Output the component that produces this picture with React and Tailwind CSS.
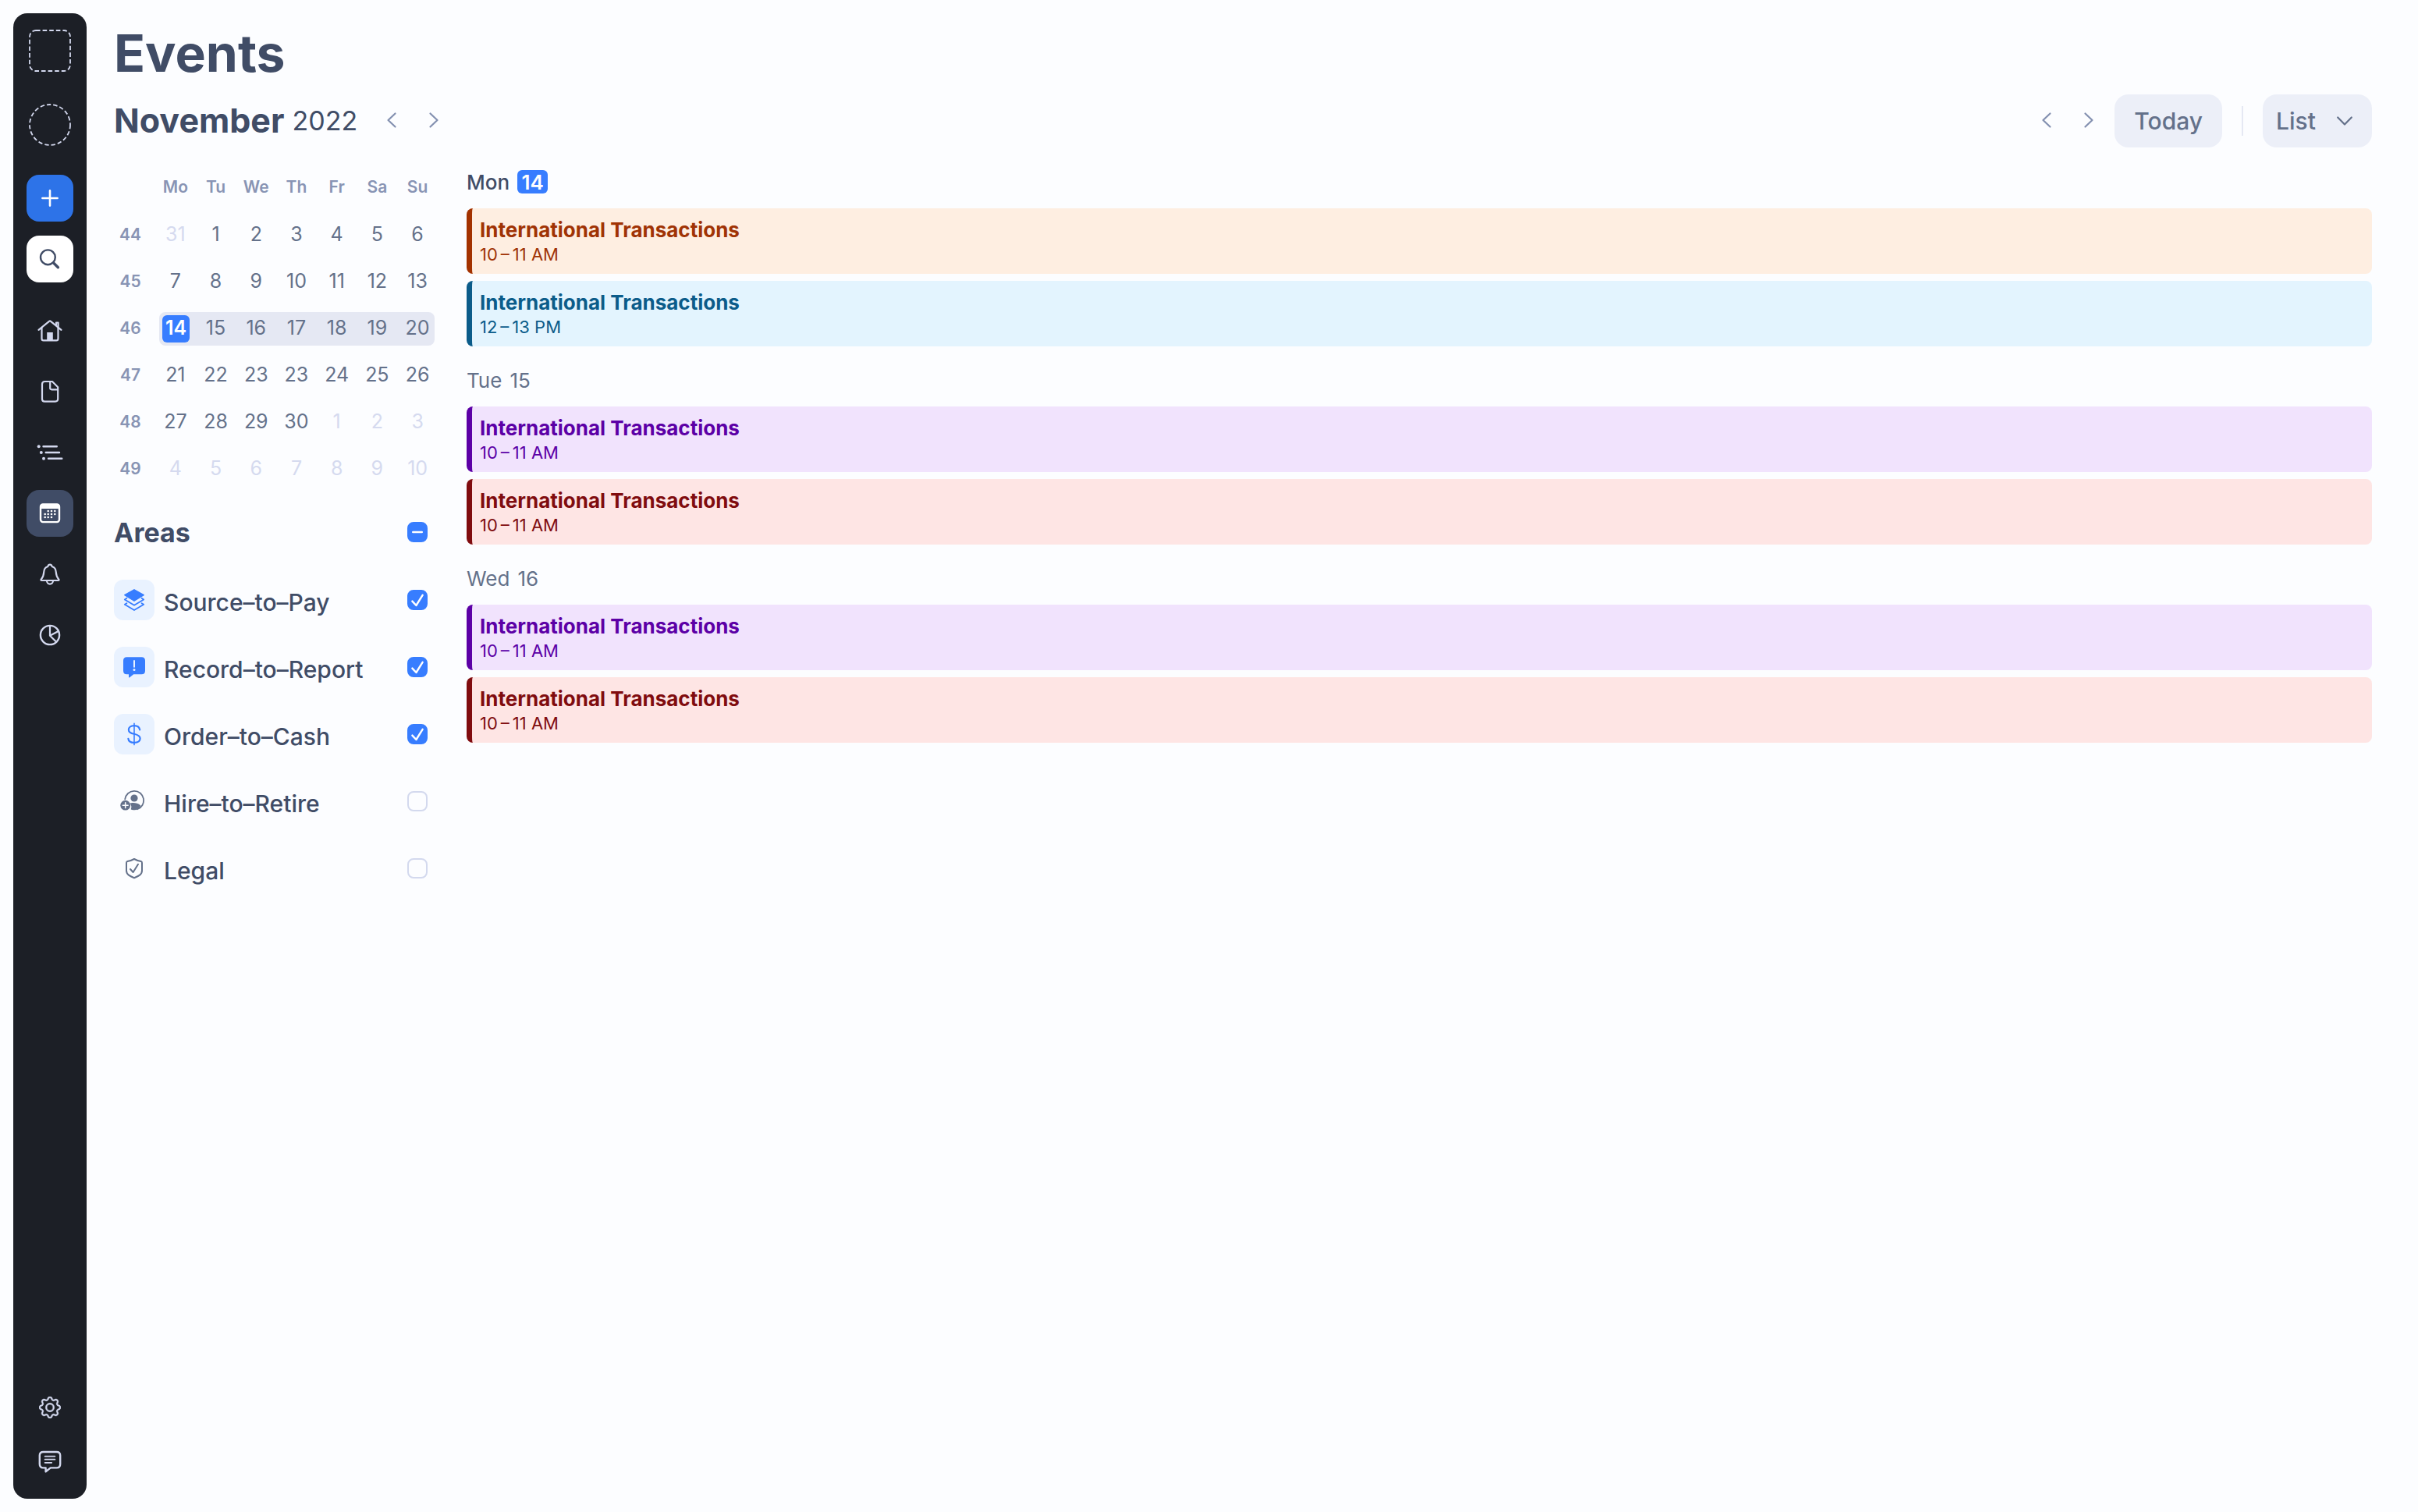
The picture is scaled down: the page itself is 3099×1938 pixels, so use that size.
import { useState } from 'react'
import { BsGear } from 'react-icons/bs'

function NavIcon({ children }) {
  return (
    <svg width="36" height="36" viewBox="-18 -18 36 36" fill="none" stroke="currentColor" strokeWidth="2.2" strokeLinecap="round" strokeLinejoin="round">
      {children}
    </svg>
  )
}

function HomeIcon() {
  return (
    <NavIcon>
      <path d="M-14.5 -1.2 L-1 -12.2 Q0 -13 1 -12.2 L14.5 -1.2" />
      <path d="M-10.5 -4 V10 Q-10.5 12.4 -8.2 12.4 H8.2 Q10.5 12.4 10.5 10 V-4" />
      <path d="M8 -7 V-10.5 H10.6 V-4.5" />
      <rect x="-3.8" y="2" width="7.6" height="10.4" fill="currentColor" stroke="none" />
    </NavIcon>
  )
}

function DocIcon() {
  return (
    <NavIcon>
      <path d="M3 -13 H-6.5 Q-10 -13 -10 -9.5 V9.5 Q-10 12.6 -6.8 12.6 H7 Q10.2 12.6 10.2 9.5 V-5.8 Z" />
      <path d="M0.2 -12.8 V-4.6 Q0.2 -2.7 2.2 -2.7 H10" />
    </NavIcon>
  )
}

function ListIcon() {
  return (
    <NavIcon>
      <path d="M-8.5 -7.7 H8.8 M-5.3 0 H12 M-2 7.7 H15.3" strokeWidth="2.4" />
      <g fill="currentColor" stroke="none">
        <circle cx="-14.3" cy="-7.7" r="2" />
        <circle cx="-11.2" cy="0" r="2" />
        <circle cx="-8" cy="7.7" r="2" />
      </g>
    </NavIcon>
  )
}

const calendarDots = [
  [-2.3, -3], [2, -3], [6.3, -3],
  [-6.3, 1], [-2.3, 1], [2, 1], [6.3, 1],
  [-6.3, 5], [-2.3, 5], [2, 5],
]

function CalendarIcon() {
  return (
    <NavIcon>
      <rect x="-12" y="-11.5" width="24" height="22.6" rx="3" strokeWidth="2.4" />
      <path d="M-12 -6.8 V-8.5 Q-12 -11.5 -9 -11.5 H9 Q12 -11.5 12 -8.5 V-6.8 Z" fill="currentColor" strokeWidth="1.4" />
      {calendarDots.map(([x, y]) => (
        <circle key={`${x},${y}`} cx={x} cy={y} r="1.3" fill="currentColor" stroke="none" />
      ))}
    </NavIcon>
  )
}

function BellIcon() {
  return (
    <NavIcon>
      <path d="M-10.5 8 H10.5 Q12.3 8 11.2 6.4 C8.5 3.5 8 1.5 7.8 -2.5 C7.6 -6.8 5.8 -9 2.8 -9.8 C2.3 -11.5 1.3 -12.4 0 -12.4 C-1.3 -12.4 -2.3 -11.5 -2.8 -9.8 C-5.8 -9 -7.6 -6.8 -7.8 -2.5 C-8 1.5 -8.5 3.5 -11.2 6.4 Q-12.3 8 -10.5 8 Z" />
      <path d="M-4 8.3 C-4 14 4 14 4 8.3" />
    </NavIcon>
  )
}

function PieIcon() {
  return (
    <NavIcon>
      <circle cx="0" cy="0" r="12.1" strokeWidth="2.4" />
      <path d="M0 -12 V0.8 L10.8 -5 M0 0.8 L8.2 8.8" />
    </NavIcon>
  )
}

function ChatIcon() {
  return (
    <NavIcon>
      <path d="M-8.5 -12 H8.5 Q13.2 -12 13.2 -7.4 V3.6 Q13.2 8.4 8.5 8.4 H0.8 L-5.4 13.2 V8.4 H-8.5 Q-13.2 8.4 -13.2 3.6 V-7.4 Q-13.2 -12 -8.5 -12 Z" strokeWidth="2.4" />
      <path d="M-6.4 -6.4 H6.4 M-6.4 -2.3 H6.4 M-6.4 1.8 H2.2" strokeWidth="1.8" />
    </NavIcon>
  )
}

function LayersIcon() {
  return (
    <NavIcon>
      <path d="M0 -13.2 L12.2 -6.3 L0 1.2 L-12.2 -6.3 Z" fill="currentColor" strokeWidth="1.4" />
      <path d="M-9.6 -2.2 L-12.2 -0.5 L0 6.8 L12.2 -0.5 L9.6 -2.2" strokeWidth="1.8" />
      <path d="M-9.6 4.2 L-12.2 5.8 L0 13 L12.2 5.8 L9.6 4.2" strokeWidth="1.8" />
    </NavIcon>
  )
}

function ReportIcon() {
  return (
    <NavIcon>
      <path d="M-9.5 -12.8 H9.5 Q14 -12.8 14 -8.3 V4.7 Q14 9.2 9.5 9.2 H-0.8 L-5.8 13.2 Q-7 14 -7 12.6 V9.2 H-9.5 Q-14 9.2 -14 4.7 V-8.3 Q-14 -12.8 -9.5 -12.8 Z" fill="currentColor" stroke="none" />
      <path d="M0 -8 V-0.3" stroke="#e9f2ff" strokeWidth="2" />
      <circle cx="0" cy="3.6" r="1.5" fill="#e9f2ff" stroke="none" />
    </NavIcon>
  )
}

function DollarIcon() {
  return (
    <NavIcon>
      <path d="M7.2 -5.6 C6.6 -9 4 -10.8 0 -10.8 C-4.4 -10.8 -7.1 -8.7 -7.1 -5.6 C-7.1 -2.4 -4.6 -1.2 0 -0.2 C5 0.9 7.6 2.4 7.6 5.6 C7.6 9 4.6 10.9 0 10.9 C-4.4 10.9 -7.2 9.2 -7.6 5.8" />
      <path d="M0 -13.6 V13.6" strokeWidth="1.6" />
    </NavIcon>
  )
}

function HireIcon() {
  return (
    <NavIcon>
      <path d="M-11.8 -2.6 A12 12 0 1 1 4 10.2" strokeWidth="1.8" />
      <circle cx="0" cy="-4" r="4.6" fill="currentColor" stroke="none" />
      <path d="M-5.6 2.8 C-3 1.6 4.5 1.6 8.2 5.4 C6.5 10 2.5 11.3 0 11.3 C-2 11.3 -3.4 11 -4.4 10.2 C-3 8 -3.4 5 -5.6 2.8 Z" fill="currentColor" stroke="none" />
      <circle cx="-11.3" cy="5.2" r="6.4" fill="currentColor" stroke="none" />
      <path d="M-11.3 1.8 V8.6 M-14.7 5.2 H-7.9" stroke="#fcfdff" strokeWidth="1.6" />
    </NavIcon>
  )
}

function ShieldIcon() {
  return (
    <NavIcon>
      <path d="M0 -12 C3 -10.4 6 -9.3 8.6 -8.9 Q10 -8.6 10 -7 V3 C10 8 5.5 10 0 12.2 C-5.5 10 -10 8 -10 3 V-7 Q-10 -8.6 -8.6 -8.9 C-6 -9.3 -3 -10.4 0 -12 Z" strokeWidth="2" />
      <path d="M-5 1 L-1.4 5 L5 -5.2" strokeWidth="2" />
    </NavIcon>
  )
}

function Chevron({ d }) {
  return (
    <svg width="24" height="24" viewBox="-12 -12 24 24" fill="none" stroke="currentColor" strokeWidth="2.2" strokeLinecap="round" strokeLinejoin="round">
      <path d={d} />
    </svg>
  )
}

function ArrowButtons({ unit }) {
  return (
    <div className="flex pb-0.5 text-[#8390b0]">
      <button aria-label={`Previous ${unit}`} className="w-[54px] h-[54px] flex items-center justify-center cursor-pointer">
        <Chevron d="M4.5 -8.5 L-4.5 0 L4.5 8.5" />
      </button>
      <button aria-label={`Next ${unit}`} className="w-[54px] h-[54px] flex items-center justify-center cursor-pointer">
        <Chevron d="M-4.5 -8.5 L4.5 0 L-4.5 8.5" />
      </button>
    </div>
  )
}

const navItems = [
  { label: 'Home', icon: HomeIcon },
  { label: 'Documents', icon: DocIcon },
  { label: 'Tasks', icon: ListIcon },
  { label: 'Events', icon: CalendarIcon, active: true },
  { label: 'Notifications', icon: BellIcon },
  { label: 'Reports', icon: PieIcon },
]

function Sidebar() {
  return (
    <aside className="w-[94px] shrink-0 rounded-[18px] bg-[#1c1f26] text-[#d3d8ee] flex flex-col items-center pt-[21px] pb-[18px]">
      <svg width="54" height="54" viewBox="0 0 54 54" fill="none" stroke="currentColor" strokeWidth="1.8" strokeDasharray="5.6 3">
        <rect x="1" y="1" width="52" height="52" rx="8" />
      </svg>
      <svg className="mt-[41px]" width="54" height="54" viewBox="0 0 54 54" fill="none" stroke="currentColor" strokeWidth="1.8" strokeDasharray="5.4 3">
        <circle cx="27" cy="27" r="26" />
      </svg>
      <div className="mt-[37px] flex flex-col gap-[18px]">
        <button aria-label="Create" className="w-[60px] h-[60px] rounded-2xl bg-[#2d73e8] text-white flex items-center justify-center cursor-pointer">
          <NavIcon><path d="M0 -9.6 V9.6 M-9.6 0 H9.6" strokeWidth="2.6" /></NavIcon>
        </button>
        <button aria-label="Search" className="w-[60px] h-[60px] rounded-2xl bg-white text-[#404c66] flex items-center justify-center cursor-pointer">
          <NavIcon>
            <circle cx="-2.6" cy="-2.2" r="9.4" strokeWidth="2.4" />
            <path d="M4.6 5 L10.4 10.8" strokeWidth="3.4" />
          </NavIcon>
        </button>
      </div>
      <nav className="mt-8 flex flex-col gap-[18px]">
        {navItems.map(({ label, icon: Icon, active }) => (
          <a
            key={label}
            href="#"
            aria-label={label}
            className={`w-[60px] h-[60px] rounded-2xl flex items-center justify-center ${active ? 'bg-[#404c66] text-white' : ''}`}
          >
            <Icon />
          </a>
        ))}
      </nav>
      <div className="mt-auto flex flex-col gap-[9px]">
        <a href="#" aria-label="Settings" className="w-[60px] h-[60px] flex items-center justify-center">
          <BsGear size={28} strokeWidth="0.3" />
        </a>
        <a href="#" aria-label="Feedback" className="w-[60px] h-[60px] flex items-center justify-center">
          <ChatIcon />
        </a>
      </div>
    </aside>
  )
}

const weekdays = ['Mo', 'Tu', 'We', 'Th', 'Fr', 'Sa', 'Su']

// muted: [from, to) columns that belong to a neighbouring month
const weeks = [
  { number: 44, days: [31, 1, 2, 3, 4, 5, 6], muted: [0, 1] },
  { number: 45, days: [7, 8, 9, 10, 11, 12, 13] },
  { number: 46, days: [14, 15, 16, 17, 18, 19, 20], current: true },
  { number: 47, days: [21, 22, 23, 23, 24, 25, 26] },
  { number: 48, days: [27, 28, 29, 30, 1, 2, 3], muted: [4, 7] },
  { number: 49, days: [4, 5, 6, 7, 8, 9, 10], muted: [0, 7] },
]

function DayCell({ day, col, current, muted }) {
  const today = current && col === 0
  let band = 'justify-center'
  if (current) {
    band = 'justify-center bg-[#e5e8f3]'
    if (col === 0) band = 'justify-start bg-[#e5e8f3] rounded-l-lg ml-[5px] pl-1'
    if (col === 6) band = 'justify-center bg-[#e5e8f3] rounded-r-lg mr-1 pl-1'
  }
  return (
    <td className="p-0">
      <div className={`h-[43px] flex items-center ${band}`}>
        <button
          className={`w-[35px] h-[35px] flex items-center justify-center rounded-md cursor-pointer ${today ? 'bg-[#377dff] text-white font-semibold' : muted ? 'text-[#d5daef]' : 'text-[#64718a]'}`}
        >
          {day}
        </button>
      </div>
    </td>
  )
}

function MonthCalendar() {
  return (
    <table className="w-full table-fixed border-collapse text-center text-[25px]">
      <thead>
        <tr className="h-[60px] text-[21px] text-[#8894b4]">
          <td className="w-[53px] p-0" />
          {weekdays.map(day => (
            <th key={day} scope="col" className="p-0 pb-0.5 font-semibold">{day}</th>
          ))}
        </tr>
      </thead>
      <tbody>
        {weeks.map(({ number, days, muted = [0, 0], current }) => (
          <tr key={number} className="h-[60px]">
            <th scope="row" className="p-0 pr-[11px] text-[21px] font-semibold text-[#8894b4]">{number}</th>
            {days.map((day, col) => (
              <DayCell key={col} day={day} col={col} current={current} muted={col >= muted[0] && col < muted[1]} />
            ))}
          </tr>
        ))}
      </tbody>
    </table>
  )
}

function Checkbox({ id, checked, mixed, onChange, label }) {
  return (
    <span className="relative flex w-[26px] h-[26px]">
      <input
        id={id}
        type="checkbox"
        aria-label={label}
        checked={checked}
        onChange={onChange}
        className="appearance-none w-[26px] h-[26px] rounded-lg border-2 border-[#d3d9ee] checked:border-[#377dff] checked:bg-[#377dff] cursor-pointer"
      />
      {checked && (
        <svg className="absolute inset-0 pointer-events-none" width="26" height="26" viewBox="0 0 26 26" fill="none" stroke="#fff" strokeWidth="2.4" strokeLinecap="round" strokeLinejoin="round">
          <path d={mixed ? 'M7.2 13 H18.8' : 'M6.4 14.6 L11.4 20 L19.6 6.8'} />
        </svg>
      )}
    </span>
  )
}

const areas = [
  { id: 'source', name: 'Source–to–Pay', icon: LayersIcon },
  { id: 'record', name: 'Record–to–Report', icon: ReportIcon },
  { id: 'order', name: 'Order–to–Cash', icon: DollarIcon },
  { id: 'hire', name: 'Hire–to–Retire', icon: HireIcon },
  { id: 'legal', name: 'Legal', icon: ShieldIcon },
]

function Areas() {
  const [selected, setSelected] = useState(['source', 'record', 'order'])
  const toggle = id => setSelected(s => (s.includes(id) ? s.filter(x => x !== id) : [...s, id]))
  const toggleAll = () => setSelected(s => (s.length ? [] : areas.map(a => a.id)))

  return (
    <section className="mt-[25px] pr-[13px]">
      <div className="h-[52px] mb-[18px] flex items-center justify-between">
        <h3 className="text-[34px] font-bold text-[#404c66]">Areas</h3>
        <Checkbox
          label="All areas"
          checked={selected.length > 0}
          mixed={selected.length < areas.length}
          onChange={toggleAll}
        />
      </div>
      <ul>
        {areas.map(({ id, name, icon: Icon }) => {
          const on = selected.includes(id)
          return (
            <li key={id} className="h-[86px] flex items-center">
              <span className={`w-[52px] h-[52px] rounded-xl flex items-center justify-center ${on ? 'bg-[#e9f2ff] text-[#377dff]' : 'text-[#64718a]'}`}>
                <Icon />
              </span>
              <label htmlFor={id} className="grow pl-3 pt-1.5 text-[30px] font-medium text-[#404c66] cursor-pointer">{name}</label>
              <Checkbox id={id} checked={on} onChange={() => toggle(id)} />
            </li>
          )
        })}
      </ul>
    </section>
  )
}

const eventColors = {
  orange: 'bg-[#feeee1] border-[#a33200] text-[#a03305]',
  blue: 'bg-[#e3f4fe] border-[#0b5c8a] text-[#0b5c8a]',
  purple: 'bg-[#f1e3fd] border-[#5c00a6] text-[#5c00a6]',
  red: 'bg-[#fee5e4] border-[#800c0f] text-[#800c0f]',
}

// time ranges are set with thin spaces round the dash
const agenda = [
  {
    weekday: 'Mon',
    day: 14,
    today: true,
    events: [
      { time: '10\u2009–\u200911 AM', color: 'orange' },
      { time: '12\u2009–\u200913 PM', color: 'blue' },
    ],
  },
  {
    weekday: 'Tue',
    day: 15,
    events: [
      { time: '10\u2009–\u200911 AM', color: 'purple' },
      { time: '10\u2009–\u200911 AM', color: 'red' },
    ],
  },
  {
    weekday: 'Wed',
    day: 16,
    events: [
      { time: '10\u2009–\u200911 AM', color: 'purple' },
      { time: '10\u2009–\u200911 AM', color: 'red' },
    ],
  },
]

function Agenda() {
  return (
    <div className="grow flex flex-col gap-[21px]">
      {agenda.map(({ weekday, day, today, events }) => (
        <section key={day}>
          <h3 className={`h-[44px] mb-3 flex items-center gap-2.5 text-[26px] ${today ? 'font-medium text-[#404c66]' : 'text-[#64718a]'}`}>
            <span>{weekday}</span>
            {today ? (
              <span className="w-[39px] h-[30px] flex items-center justify-center rounded-md bg-[#377dff] text-white font-semibold">{day}</span>
            ) : (
              <span>{day}</span>
            )}
          </h3>
          <div className="flex flex-col gap-[9px]">
            {events.map(({ time, color }) => (
              <article key={color} className={`rounded-lg border-l-[7px] pl-2.5 pt-3 pb-2.5 ${eventColors[color]}`}>
                <h4 className="text-[26px] leading-8 font-bold">International Transactions</h4>
                <p className="text-[22px] leading-[30px]">{time}</p>
              </article>
            ))}
          </div>
        </section>
      ))}
    </div>
  )
}

export default function App() {
  return (
    <div className="min-h-screen flex bg-[#fcfdff] p-[17px] font-['Inter',sans-serif]">
      <Sidebar />
      <main className="grow pl-[35px] pr-[42px] pt-[11px]">
        <h1 className="text-[66px] leading-[80px] font-bold text-[#404c66]">Events</h1>
        <header className="mt-[13px] h-[68px] flex items-center">
          <h2 className="flex items-center gap-2.5 pb-0.5 text-[#404c66]">
            <span className="text-[43px] font-bold">November</span>
            <span className="text-[34px]">2022</span>
          </h2>
          <div className="ml-[17px]">
            <ArrowButtons unit="month" />
          </div>
          <div className="ml-auto flex items-center">
            <ArrowButtons unit="day" />
            <button className="ml-1.5 h-[68px] px-[25px] rounded-[18px] bg-[#eceff8] text-[30px] font-medium text-[#64718a] cursor-pointer">Today</button>
            <div className="mx-[25px] w-[2px] h-[38px] bg-[#e5e8f3]" />
            <div className="relative text-[#64718a]">
              <select aria-label="View" className="appearance-none w-[140px] h-[68px] pl-[17px] rounded-[18px] bg-[#eceff8] text-[30px] font-medium cursor-pointer">
                <option>List</option>
                <option>Week</option>
                <option>Month</option>
              </select>
              <span className="absolute right-[23px] top-[22px] pointer-events-none">
                <Chevron d="M-8.8 -4.5 L0 4.5 L8.8 -4.5" />
              </span>
            </div>
          </div>
        </header>
        <div className="mt-[22px] flex gap-[37px]">
          <div className="w-[415px] shrink-0">
            <MonthCalendar />
            <Areas />
          </div>
          <Agenda />
        </div>
      </main>
    </div>
  )
}
